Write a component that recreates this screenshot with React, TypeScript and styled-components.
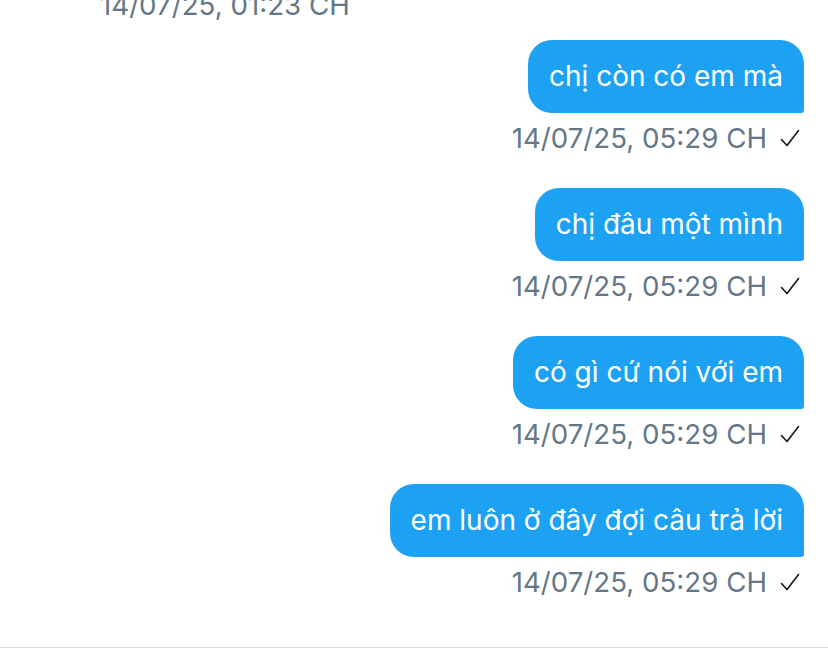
import React from "react";
import styled, { createGlobalStyle } from "styled-components";

const Global = createGlobalStyle`
  html, body { margin: 0; padding: 0; background: #ffffff; }
  body { font-family: Inter, "Noto Sans", "Liberation Sans", sans-serif; }
`;

const Page = styled.div`
  width: 828px;
  height: 666px;
  overflow: hidden;
  background: #ffffff;
  display: flex;
  flex-direction: column;
`;

const Thread = styled.div`
  height: 648px;
  overflow: hidden;
  display: flex;
  flex-direction: column;
  padding: 0 24px 0 100px;
  box-sizing: border-box;
  border-bottom: 1px solid #dcdcdc;
`;

const Group = styled.div<{ $mine?: boolean }>`
  display: flex;
  flex-direction: column;
  align-items: ${(p) => (p.$mine ? "flex-end" : "flex-start")};
  margin-bottom: 32px;
  &:first-child { margin-top: -13px; margin-bottom: 17px; }
`;

const Bubble = styled.div`
  background: #1da1f2;
  color: #ffffff;
  font-size: 28px;
  line-height: 73px;
  height: 73px;
  padding: 0 21px;
  border-radius: 24px 24px 3px 24px;
  white-space: nowrap;
`;

const Meta = styled.div<{ $first?: boolean }>`
  display: flex;
  align-items: center;
  gap: 12px;
  height: 36px;
  margin-top: ${(p) => (p.$first ? "0" : "7px")};
  font-size: 27.7px;
  color: #657786;
  white-space: nowrap;
`;

const Check = styled.svg`
  width: 22px;
  height: 22px;
  margin-right: 3px;
`;

const CheckIcon = () => (
  <Check viewBox="0 0 22 22" fill="none">
    <path d="M2.5 12.5 L8 18.5 L19.5 3.5" stroke="#14171a" strokeWidth="1.6" strokeLinecap="round" strokeLinejoin="round" />
  </Check>
);

const messages = [
  "chị còn có em mà",
  "chị đâu một mình",
  "có gì cứ nói với em",
  "em luôn ở đây đợi câu trả lời",
];

export default function App() {
  return (
    <Page>
      <Global />
      <Thread>
        <Group>
          <Meta $first>14/07/25, 01:23 CH</Meta>
        </Group>
        {messages.map((m) => (
          <Group $mine key={m}>
            <Bubble>{m}</Bubble>
            <Meta>
              <span>14/07/25, 05:29 CH</span>
              <CheckIcon />
            </Meta>
          </Group>
        ))}
      </Thread>
    </Page>
  );
}
